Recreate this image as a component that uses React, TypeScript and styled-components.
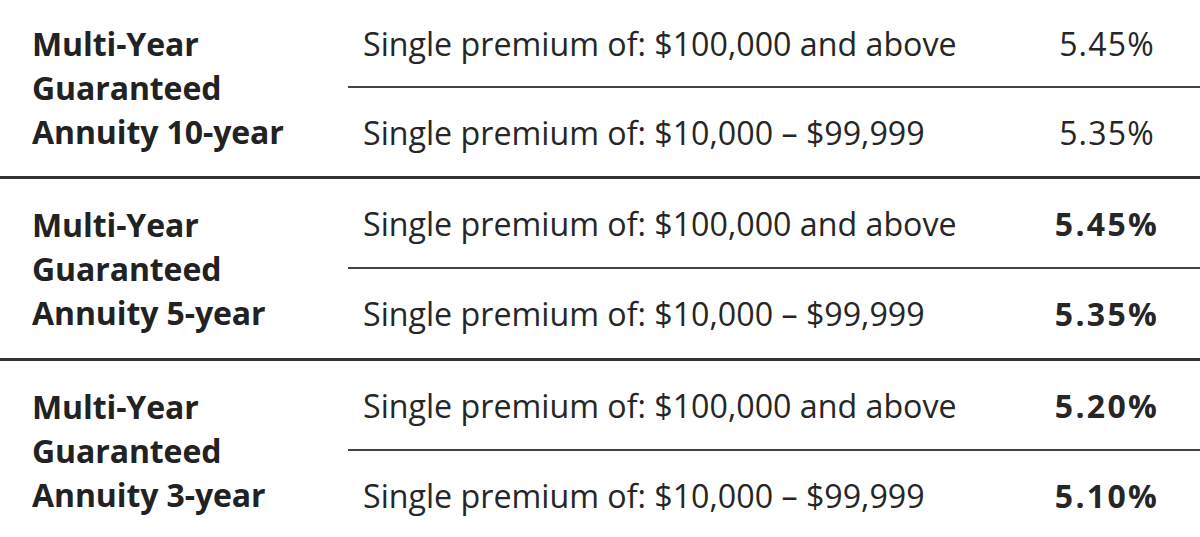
import { Fragment } from 'react'
import styled, { createGlobalStyle } from 'styled-components'

const GlobalStyle = createGlobalStyle`
	html, body {
		margin: 0;
		padding: 0;
		background: #ffffff;
	}
	body {
		font-family: 'Open Sans', 'Noto Sans', sans-serif;
		color: #262626;
	}
`

const Table = styled.section`
	width: 1200px;
	display: flex;
	flex-direction: column;
	overflow: hidden;
`

const Group = styled.div<{ first?: boolean }>`
	display: grid;
	grid-template-columns: 348px 1fr 188px;
	grid-template-rows: ${props => props.first ? '88px 88px' : '90px 89px'};
	border-bottom: 3px solid #333333;
`

const Product = styled.div`
	grid-row: 1 / span 2;
	display: flex;
	align-items: center;
	padding-left: 32px;
	font-size: 32px;
	font-weight: 700;
	line-height: 44px;
	letter-spacing: -0.1px;
	color: #222222;
`

const Cell = styled.div<{ divided?: boolean }>`
	display: flex;
	align-items: center;
	font-size: 32px;
	border-bottom: ${props => props.divided ? '2px solid #444444' : 'none'};
`

const Premium = styled(Cell)`
	padding-left: 15px;
	letter-spacing: 0;
	font-size: 32.2px;
`

const Rate = styled(Cell)<{ bold?: boolean }>`
	justify-content: center;
	padding-left: 2px;
	font-weight: ${props => props.bold ? 700 : 400};
	letter-spacing: ${props => props.bold ? '2.3px' : '1.2px'};
`

const rows = [
	{ years: '10-year', rates: ['5.45%', '5.35%'], bold: false },
	{ years: '5-year', rates: ['5.45%', '5.35%'], bold: true },
	{ years: '3-year', rates: ['5.20%', '5.10%'], bold: true },
]

const App = () => (
	<Fragment>
		<GlobalStyle />
		<Table>
			{rows.map((r, i) => (
				<Group key={r.years} first={i === 0}>
					<Product>
						Multi-Year<br />Guaranteed<br />Annuity {r.years}
					</Product>
					<Premium divided>Single premium of: $100,000 and above</Premium>
					<Rate divided bold={r.bold}>{r.rates[0]}</Rate>
					<Premium>Single premium of: $10,000 – $99,999</Premium>
					<Rate bold={r.bold}>{r.rates[1]}</Rate>
				</Group>
			))}
		</Table>
	</Fragment>
)

export default App
